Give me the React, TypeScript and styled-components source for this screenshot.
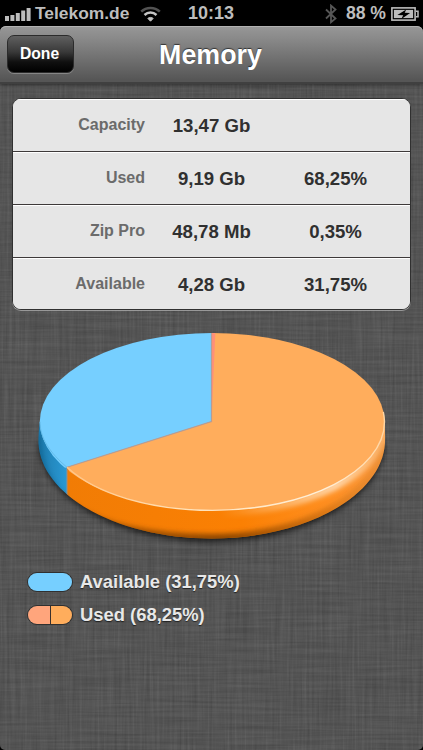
import React from "react";
import styled, { createGlobalStyle } from "styled-components";

const linen = encodeURIComponent(
  `<svg xmlns="http://www.w3.org/2000/svg" width="423" height="750">
<filter id="v" x="0" y="0" width="100%" height="100%" color-interpolation-filters="sRGB"><feTurbulence type="fractalNoise" baseFrequency="0.4 0.014" numOctaves="3" seed="4"/><feColorMatrix values="1 0 0 0 -0.17  1 0 0 0 -0.17  1 0 0 0 -0.17  0 0 0 0 1"/></filter>
<filter id="h" x="0" y="0" width="100%" height="100%" color-interpolation-filters="sRGB"><feTurbulence type="fractalNoise" baseFrequency="0.014 0.4" numOctaves="3" seed="9"/><feColorMatrix values="1 0 0 0 -0.17  1 0 0 0 -0.17  1 0 0 0 -0.17  0 0 0 0 1"/></filter>
<rect width="423" height="750" fill="#545454"/>
<rect width="423" height="750" filter="url(#v)" opacity=".09"/>
<rect width="423" height="750" filter="url(#h)" opacity=".08"/>
</svg>`
);

const GlobalStyle = createGlobalStyle`
  * { box-sizing: border-box; }
  body { margin: 0; background: #000; }
`;

const Screen = styled.div`
  width: 423px;
  height: 750px;
  overflow: hidden;
  display: flex;
  flex-direction: column;
  background: #000;
  font-family: "Liberation Sans", Arial, sans-serif;
  font-weight: 700;
  white-space: nowrap;
`;

const StatusBar = styled.div`
  height: 26px;
  flex: none;
  display: grid;
  grid-template-columns: 1fr auto 1fr;
  align-items: center;
  padding: 1px 4px 0 5px;
  color: #bdbdbd;
  font-size: 17.6px;
  line-height: 25px;
`;

const StatusGroup = styled.div<{ $end?: boolean }>`
  display: flex;
  align-items: center;
  justify-content: ${(p) => (p.$end ? "flex-end" : "flex-start")};
`;

const Clock = styled.span`
  font-size: 18px;
  margin-right: 2px;
`;

const Carrier = styled.span`
  font-size: 17.4px;
  margin: 0 11px 0 4px;
`;

const Battery = styled.span`
  margin: 0 5px 0 9px;
`;

const NavBar = styled.header`
  height: 58px;
  flex: none;
  display: grid;
  grid-template-columns: 67px 1fr 67px;
  align-items: center;
  padding: 0 7px;
  border-radius: 6px 6px 0 0;
  background: linear-gradient(#979797, #8b8b8b 20%, #565656 96%);
  border-bottom: 2px solid #404040;
  box-shadow: inset 0 1px 0 #b2b2b2, 0 1px 4px rgba(0, 0, 0, 0.45);
  z-index: 1;
`;

const DoneButton = styled.button`
  height: 38px;
  padding: 0 2px 0 0;
  border: 1px solid #2b2b2b;
  border-radius: 7px;
  background: linear-gradient(#606060, #383838 45%, #101010 72%, #000);
  box-shadow: 0 1px 0 rgba(255, 255, 255, 0.25);
  color: #fff;
  font: 700 15.7px "Liberation Sans", Arial, sans-serif;
`;

const Title = styled.h1`
  margin: 0;
  padding: 2px 2px 0 0;
  text-align: center;
  color: #fff;
  font-size: 26.8px;
  line-height: 30px;
  text-shadow: 0 -1px 1px rgba(0, 0, 0, 0.6);
`;

const Content = styled.main`
  flex: 1;
  display: flex;
  flex-direction: column;
  border-radius: 0 0 5px 5px;
  background: url("data:image/svg+xml,${linen}") 0 0 / 423px 750px;
`;

const Table = styled.section`
  margin: 14px 12px 0;
  width: 399px;
  height: 212px;
  border: 1px solid #303030;
  border-radius: 9px;
  overflow: hidden;
  box-shadow: 0 1px 0 0 rgba(170, 170, 170, 0.8);
  background: #e6e6e6;
`;

const Row = styled.div`
  height: 53px;
  display: grid;
  grid-template-columns: 132px 133px 115px;
  align-items: center;
  background: #e6e6e6;
  box-shadow: inset 0 1px 0 #fff;
  &:first-child {
    height: 52px;
  }
  & + & {
    border-top: 1px solid #3e3a3a;
  }
`;

const Label = styled.span`
  text-align: right;
  font-size: 16px;
  color: #6b6b6b;
`;

const Value = styled.span`
  text-align: center;
  font-size: 18.6px;
  color: #303030;
  padding-top: 2px;
`;

const Chart = styled.svg`
  display: block;
  flex: none;
  width: 423px;
  height: 251px;
`;

const Legend = styled.div`
  display: flex;
  flex-direction: column;
  gap: 11px;
  padding: 10px 0 0 27px;
`;

const LegendItem = styled.div`
  height: 22px;
  display: flex;
  align-items: center;
  gap: 7px;
  color: #e8e8e8;
  font-size: 18.4px;
  line-height: 22px;
  text-shadow: 0 1px 1px rgba(0, 0, 0, 0.6);
`;

const Swatch = styled.span`
  width: 46px;
  height: 20px;
  margin-bottom: 1px;
  display: flex;
  border: 1px solid #303030;
  border-radius: 10px;
  overflow: hidden;
`;

const SwatchPart = styled.span<{ $color: string }>`
  flex: 1;
  background: ${(p) => p.$color};
  & + & {
    border-left: 1px solid #3a302c;
  }
`;

const rows = [
  ["Capacity", "13,47 Gb", ""],
  ["Used", "9,19 Gb", "68,25%"],
  ["Zip Pro", "48,78 Mb", "0,35%"],
  ["Available", "4,28 Gb", "31,75%"],
];

const legend = [
  { text: "Available (31,75%)", colors: ["#76cfff"] },
  { text: "Used (68,25%)", colors: ["#ffa57c", "#ffad5c"] },
];

const SignalIcon = () => (
  <svg width="26" height="14" viewBox="0 0 26 14" fill="#bdbdbd">
    <rect x="0" y="9" width="4" height="5" />
    <rect x="5.4" y="8" width="4" height="6" />
    <rect x="10.8" y="6" width="4" height="8" />
    <rect x="16.2" y="3.5" width="4" height="10.5" />
    <rect x="21.6" y="1" width="4" height="13" />
  </svg>
);

const WifiIcon = () => (
  <svg width="21" height="16" viewBox="0 0 21 16" fill="none" strokeWidth="2.5">
    <path d="M1.2 5.7C6.4.6 14.6.6 19.8 5.7" stroke="#525252" />
    <path d="M4.5 9C8 5.8 13 5.8 16.5 9" stroke="#c4c4c4" />
    <path d="M7.8 12.4c1.7-1.3 3.7-1.3 5.4 0L10.5 15.2z" fill="#c4c4c4" stroke="#c4c4c4" strokeWidth="1" />
  </svg>
);

const BluetoothIcon = () => (
  <svg width="12" height="20" viewBox="0 0 12 20" fill="none" stroke="#565656" strokeWidth="1.8">
    <path d="M1 5.5l9.5 9L6 18.2V1.6l4.5 3.9L1 14.5" />
  </svg>
);

const BatteryIcon = () => (
  <svg width="28" height="14" viewBox="0 0 28 14">
    <rect x=".9" y=".9" width="23.2" height="12.2" fill="none" stroke="#bdbdbd" strokeWidth="1.6" />
    <rect x="2.9" y="2.9" width="19.2" height="8.2" fill="#bdbdbd" />
    <path d="M25 4.3h2v5.4h-2" fill="none" stroke="#bdbdbd" strokeWidth="1.5" />
    <path d="M15.2 2.6L6.4 8.1l5.8.2-1.8 3.6 8.7-5.8-5.4-.3z" fill="#000" />
  </svg>
);

const PieChart = () => (
  <Chart viewBox="0 310 423 251">
    <defs>
      <linearGradient id="blueSide" x1="39" y1="0" x2="68" y2="0" gradientUnits="userSpaceOnUse">
        <stop offset="0" stopColor="#1c79ab" />
        <stop offset=".4" stopColor="#2388be" />
        <stop offset="1" stopColor="#2a9ad6" />
      </linearGradient>
      <linearGradient id="orangeSide" x1="67" y1="0" x2="386" y2="0" gradientUnits="userSpaceOnUse">
        <stop offset="0" stopColor="#f17c05" />
        <stop offset=".55" stopColor="#fb8003" />
        <stop offset=".82" stopColor="#ff8f20" />
        <stop offset="1" stopColor="#fa9a40" />
      </linearGradient>
      <linearGradient id="edgeShade" x1="67" y1="0" x2="386" y2="0" gradientUnits="userSpaceOnUse">
        <stop offset="0" stopColor="#7b3d00" stopOpacity=".55" />
        <stop offset=".5" stopColor="#7b3d00" stopOpacity=".85" />
        <stop offset=".85" stopColor="#8b4500" stopOpacity=".25" />
        <stop offset="1" stopColor="#8b4500" stopOpacity=".1" />
      </linearGradient>
      <linearGradient id="rim" x1="67" y1="0" x2="386" y2="0" gradientUnits="userSpaceOnUse">
        <stop offset="0" stopColor="#ffc587" />
        <stop offset=".35" stopColor="#ffe0b5" />
        <stop offset=".8" stopColor="#fff0d9" />
        <stop offset="1" stopColor="#ffd5a2" />
      </linearGradient>
      <linearGradient id="glow" x1="220" y1="0" x2="386" y2="0" gradientUnits="userSpaceOnUse">
        <stop offset="0" stopColor="#ffe0b5" stopOpacity="0" />
        <stop offset=".7" stopColor="#ffe4c4" stopOpacity=".85" />
        <stop offset="1" stopColor="#ffe0b5" stopOpacity=".3" />
      </linearGradient>
      <clipPath id="body">
        <path d="M40 421.5C38.8 428 38.5 435 38.5 443C41 496 118 538.5 211.5 538.5S382 496 385 443C385.2 435 385 428 384.5 421.5A172.5 88.5 0 0 0 40 421.5Z" />
      </clipPath>
      <clipPath id="top">
        <ellipse cx="212.2" cy="421.8" rx="172.4" ry="88.7" />
      </clipPath>
      <filter id="shadowBlur" x="-10%" y="-20%" width="120%" height="150%">
        <feGaussianBlur stdDeviation="3" />
      </filter>
      <filter id="softBlur" x="-10%" y="-30%" width="120%" height="160%">
        <feGaussianBlur stdDeviation="2.4" />
      </filter>
    </defs>
    <path d="M38.5 441C41 496 118 539.5 211.5 539.5S382 496 385 441Z" transform="translate(0 2)" fill="#000" opacity=".7" filter="url(#shadowBlur)" />
    <g clipPath="url(#body)">
      <rect x="30" y="330" width="37.2" height="215" fill="url(#blueSide)" />
      <rect x="67" y="330" width="325" height="215" fill="url(#orangeSide)" />
      <path d="M67 507C98 528 150 540 211.5 540C305 539.5 382 496 386 443" fill="none" stroke="url(#edgeShade)" strokeWidth="12" filter="url(#softBlur)" />
      <path d="M38 435C39 465 51 487 67 498" fill="none" stroke="#0d4c72" strokeWidth="3" opacity=".6" filter="url(#softBlur)" />
      <ellipse cx="212.2" cy="424" rx="172.3" ry="88.5" fill="none" stroke="url(#glow)" strokeWidth="8" filter="url(#softBlur)" />
      <path d="M67 467v40" stroke="#9a8e8b" />
    </g>
    <g clipPath="url(#top)">
      <path d="M211.5 421.5L67 467.2L100 530H400V320H211.5Z" fill="#ffad5c" />
      <path d="M211.5 421.5L67 467.2L20 482V320H211.5Z" fill="#76cfff" />
      <path d="M211.5 421.5V331H215.4Z" fill="#ff8f78" />
      <path d="M211.5 333V421.5L67 467.3" fill="none" stroke="#b89c93" strokeWidth="1.2" />
    </g>
    <path d="M67 467.3C96 494 150 510.4 212.2 510.4C307 510.4 384.5 471 384.5 421.8C384.3 418 384 415 383.3 412" fill="none" stroke="url(#rim)" strokeWidth="1.4" />
    <path d="M67 467.3C50 453 40 438 40 421.8" fill="none" stroke="#65bce9" />
  </Chart>
);

export default function App() {
  return (
    <Screen>
      <GlobalStyle />
      <StatusBar>
        <StatusGroup>
          <SignalIcon />
          <Carrier>Telekom.de</Carrier>
          <WifiIcon />
        </StatusGroup>
        <Clock>10:13</Clock>
        <StatusGroup $end>
          <BluetoothIcon />
          <Battery>88 %</Battery>
          <BatteryIcon />
        </StatusGroup>
      </StatusBar>
      <NavBar>
        <DoneButton>Done</DoneButton>
        <Title>Memory</Title>
      </NavBar>
      <Content>
        <Table>
          {rows.map(([label, size, share]) => (
            <Row key={label}>
              <Label>{label}</Label>
              <Value>{size}</Value>
              <Value>{share}</Value>
            </Row>
          ))}
        </Table>
        <PieChart />
        <Legend>
          {legend.map((item) => (
            <LegendItem key={item.text}>
              <Swatch>
                {item.colors.map((c) => (
                  <SwatchPart key={c} $color={c} />
                ))}
              </Swatch>
              {item.text}
            </LegendItem>
          ))}
        </Legend>
      </Content>
    </Screen>
  );
}
